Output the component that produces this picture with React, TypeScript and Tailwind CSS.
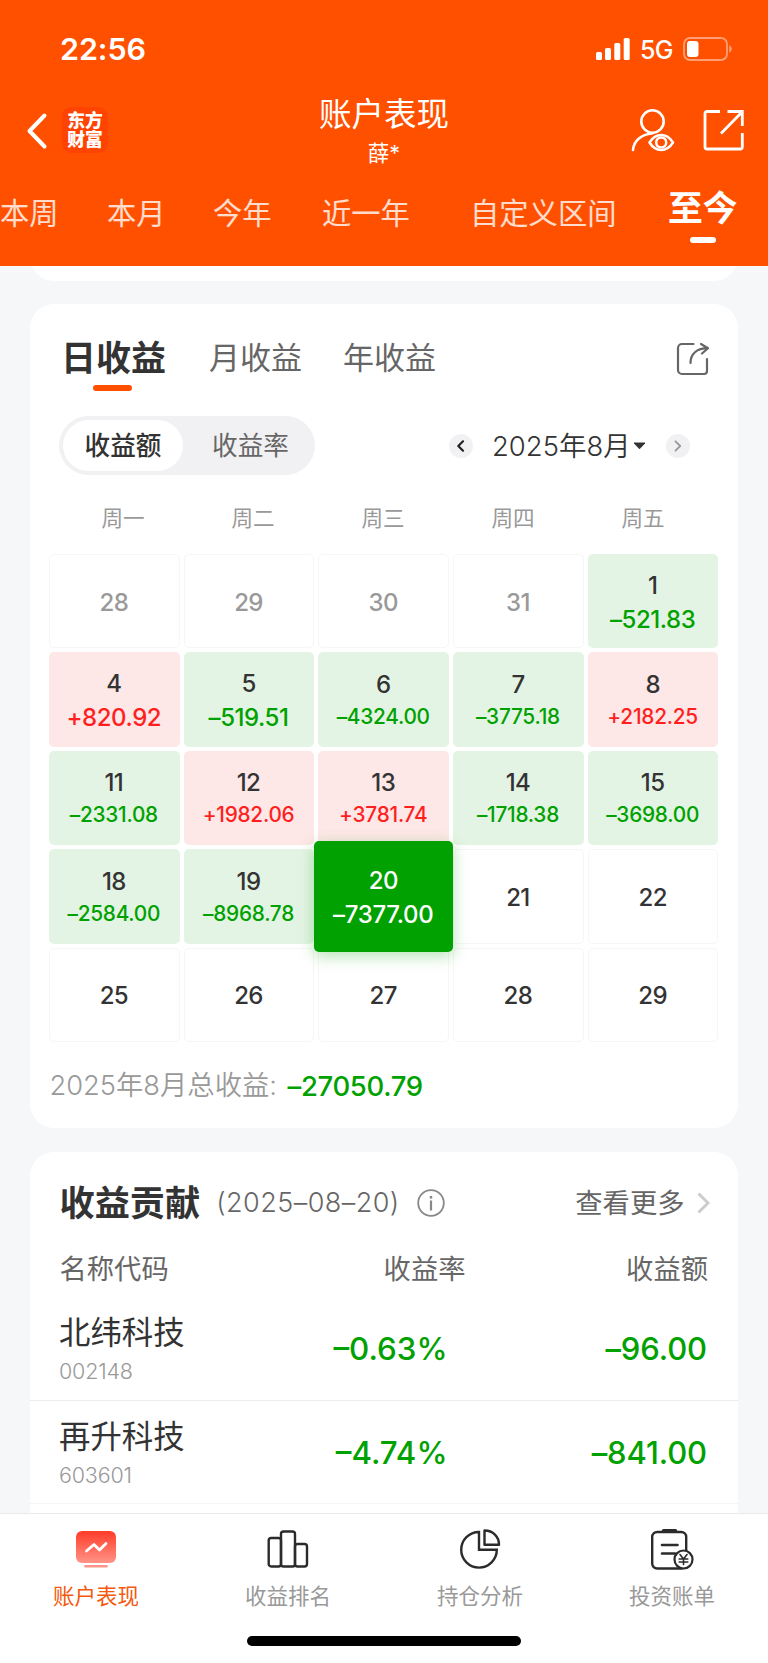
import React from 'react';

type Tone = 'up' | 'down' | 'muted' | 'plain' | 'active';
type Day = { day: string; value?: string; tone: Tone };

const days: Day[] = [
  { day: '28', tone: 'muted' },
  { day: '29', tone: 'muted' },
  { day: '30', tone: 'muted' },
  { day: '31', tone: 'muted' },
  { day: '1', value: '–521.83', tone: 'down' },
  { day: '4', value: '+820.92', tone: 'up' },
  { day: '5', value: '–519.51', tone: 'down' },
  { day: '6', value: '–4324.00', tone: 'down' },
  { day: '7', value: '–3775.18', tone: 'down' },
  { day: '8', value: '+2182.25', tone: 'up' },
  { day: '11', value: '–2331.08', tone: 'down' },
  { day: '12', value: '+1982.06', tone: 'up' },
  { day: '13', value: '+3781.74', tone: 'up' },
  { day: '14', value: '–1718.38', tone: 'down' },
  { day: '15', value: '–3698.00', tone: 'down' },
  { day: '18', value: '–2584.00', tone: 'down' },
  { day: '19', value: '–8968.78', tone: 'down' },
  { day: '20', value: '–7377.00', tone: 'active' },
  { day: '21', tone: 'plain' },
  { day: '22', tone: 'plain' },
  { day: '25', tone: 'plain' },
  { day: '26', tone: 'plain' },
  { day: '27', tone: 'plain' },
  { day: '28', tone: 'plain' },
  { day: '29', tone: 'plain' },
];

const toneClass: Record<Tone, string> = {
  up: 'bg-[#fee7e7] text-[#333]',
  down: 'bg-[#e4f4e4] text-[#333]',
  muted: 'border-[1.5px] border-[#f6f6f6] text-[#999]',
  plain: 'border-[1.5px] border-[#f6f6f6] text-[#333]',
  active: 'relative z-10 -mx-[4.2px] -my-[8.2px] bg-[#00a100] text-white shadow-[0_4px_16px_rgba(0,161,0,0.3)]',
};

function DayCell({ day, value, tone }: Day) {
  const short = !!value && (value.length === 7 || tone === 'active');
  const valueColor = tone === 'up' ? 'text-[#ff1f1f]' : tone === 'active' ? 'text-white' : 'text-[#00a100]';
  return (
    <div className={`flex flex-col items-center justify-center rounded-[5px] pt-[3px] pr-[1px] font-medium ${toneClass[tone]}`}>
      <span className="text-[24px] leading-[32px] tracking-[-0.6px]">{day}</span>
      {value && (
        <span
          className={`${valueColor} ${
            tone === 'active'
              ? 'mt-[2px] text-[24px] leading-[32px] tracking-[-0.3px]'
              : short
                ? 'mt-[2px] text-[24px] leading-[32px] tracking-[-0.45px]'
                : 'text-[20.8px] leading-[32px] tracking-[-0.25px]'
          }`}
        >
          {value}
        </span>
      )}
    </div>
  );
}

function StatusBar() {
  return (
    <div className="flex h-[98px] items-center pl-[60px] pr-[35px]">
      <span className="text-[30.5px] font-semibold leading-none tracking-[-0.1px]">22:56</span>
      <svg className="ml-auto" width="34" height="24" viewBox="0 0 34 24" fill="#fff">
        <rect x="0" y="15" width="6" height="8" rx="1.6" />
        <rect x="9" y="11" width="6" height="12" rx="1.6" />
        <rect x="18.3" y="6" width="6" height="17" rx="1.6" />
        <rect x="27.7" y="1" width="6" height="22" rx="1.6" />
      </svg>
      <span className="ml-[10px] w-[34px] pt-[3px] text-[25px] font-[450] leading-none tracking-[-0.6px]">5G</span>
      <svg className="ml-[9px]" width="50" height="24" viewBox="0 0 50 24">
        <rect x="1" y="1" width="43" height="22" rx="6" fill="none" stroke="#fff" strokeOpacity=".45" strokeWidth="1.8" />
        <rect x="4" y="4" width="11.5" height="16" rx="3" fill="#fff" />
        <path d="M46.2 8.5c1.9.6 2.6 2 2.6 3.5s-.7 2.9-2.6 3.5z" fill="#fff" fillOpacity=".45" />
      </svg>
    </div>
  );
}

function TitleBar() {
  return (
    <div className="flex h-[82px] items-start px-[24px]">
      <div className="flex w-[220px] items-center pt-[9px]">
        <svg width="26" height="46" viewBox="0 0 26 46" fill="none" stroke="#fff" strokeWidth="4" strokeLinecap="round" strokeLinejoin="round">
          <path d="M20.500 8.500 5.500 24l15 15.500" />
        </svg>
        <div className="ml-[12px] flex h-[46px] w-[46px] flex-col items-center justify-center rounded-[9px] bg-[#ff4300] text-[17.8px] font-black leading-[19.5px]">
          <span>东方</span>
          <span>财富</span>
        </div>
      </div>
      <div className="flex flex-1 flex-col items-center">
        <span className="text-[32.5px] leading-[34px]">账户表现</span>
        <span className="mt-[6px] text-[21.500px] leading-[30px]">薛*</span>
      </div>
      <div className="flex w-[220px] justify-end gap-[27px] pt-[10px]">
        <svg width="46" height="46" viewBox="0 0 46 46" fill="none" stroke="#fff" strokeWidth="2.6" strokeLinecap="round">
          <circle cx="23.5" cy="13.5" r="11.2" />
          <path d="M23 25.5C12 26.5 4.600 33 4 42" />
          <path d="M20.500 34.500c6.300-10 17.200-10 23.500 0-6.300 10-17.200 10-23.500 0Z" strokeWidth="2.500" strokeLinejoin="round" />
          <circle cx="32.200" cy="34.500" r="5" strokeWidth="2.500" />
        </svg>
        <svg width="42" height="46" viewBox="0 0 42 46" fill="none" stroke="#fff" strokeWidth="2.8">
          <path d="M18 3.500H5a2 2 0 0 0-2 2V39a2 2 0 0 0 2 2h33.300a2 2 0 0 0 2-2V25" />
          <path d="M25.500 3.500h14.800v14.500M40 4 19 25.500" />
        </svg>
      </div>
    </div>
  );
}

function RangeTabs() {
  return (
    <div className="flex h-[86px] text-[29.300px] leading-[68px] text-white/80">
      <span className="w-[107px]">本周</span>
      <span className="w-[106px]">本月</span>
      <span className="w-[109px]">今年</span>
      <span className="w-[148px]">近一年</span>
      <span className="w-[198px]">自定义区间</span>
      <div className="flex flex-col items-center text-white">
        <span className="text-[34.800px] font-bold leading-[57px]">至今</span>
        <span className="h-[6px] w-[26px] rounded-full bg-white" />
      </div>
    </div>
  );
}

function ProfitCalendar() {
  return (
    <section className="h-[824px] rounded-[24px] bg-white">
      <div className="flex h-[112px] pl-[31px] pr-[28px] text-[31px] text-[#666]">
        <div className="flex w-[105px] flex-col items-center pt-[29px]">
          <span className="text-[35px] font-bold leading-[50px] text-[#333]">日收益</span>
          <span className="mt-[2px] h-[6px] w-[39px] rounded-full bg-[#ff5000] mr-[3px]" />
        </div>
        <span className="ml-[43px] w-[134px] pt-[29px] leading-[49px]">月收益</span>
        <span className="pt-[29px] leading-[49px]">年收益</span>
        <svg className="ml-auto mt-[37px]" width="36" height="36" viewBox="0 0 36 36" fill="none" stroke="#666" strokeWidth="2.2" strokeLinecap="round" strokeLinejoin="round">
          <path d="M19.500 3H8a4 4 0 0 0-4 4v22a4 4 0 0 0 4 4h22a3 3 0 0 0 3-3V18" />
          <path d="M16.500 22c0-9 6-14.800 17.500-14.800M27 3l7 4.200-6 5.300" />
        </svg>
      </div>
      <div className="flex h-[59px] items-center pl-[29px]">
        <div className="flex h-[59px] w-[256px] items-center rounded-full bg-[#f1f1f3] p-[4px] text-[25.600px]">
          <span className="flex h-full w-[120px] items-center justify-center rounded-full bg-white pt-[2px] font-medium text-[#333]">收益额</span>
          <span className="flex-1 pt-[2px] pl-[7px] text-center text-[#666]">收益率</span>
        </div>
        <span className="ml-[133.500px] flex h-[24px] w-[24px] items-center justify-center rounded-full bg-[#f1f1f3]">
          <svg width="8" height="12" viewBox="0 0 8 12" fill="none" stroke="#222" strokeWidth="2.200" strokeLinecap="round" strokeLinejoin="round">
            <path d="M6 1.300 1.300 6l4.700 4.700" />
          </svg>
        </span>
        <span className="ml-[19.500px] w-[141px] whitespace-nowrap pt-[2px] text-[27.400px] font-[350] tracking-[0.050px] text-[#333]">2025年8月</span>
        <svg width="13" height="8" viewBox="0 0 13 8" fill="#333">
          <path d="M1 1h11L6.500 6.800z" stroke="#333" strokeLinejoin="round" />
        </svg>
        <span className="ml-[19.500px] flex h-[24px] w-[24px] items-center justify-center rounded-full bg-[#f1f1f3]">
          <svg width="8" height="12" viewBox="0 0 8 12" fill="none" stroke="#999" strokeWidth="1.800" strokeLinecap="round" strokeLinejoin="round">
            <path d="M1.500 1.300 6.200 6l-4.700 4.700" />
          </svg>
        </span>
      </div>
      <div className="grid h-[79px] grid-cols-5 pl-[28px] pr-[30px] pt-[10px] text-center text-[21.600px] leading-[66px] text-[#999]">
        <span>周一</span>
        <span>周二</span>
        <span>周三</span>
        <span>周四</span>
        <span>周五</span>
      </div>
      <div className="ml-[19px] mr-[19.500px] grid h-[488px] grid-cols-5 grid-rows-5 gap-[4px]">
        {days.map((d, i) => (
          <DayCell key={i} {...d} />
        ))}
      </div>
      <div className="flex h-[86px] items-center pl-[19.500px] pt-[3px] text-[27.300px] font-[350] text-[#999]">
        <span className="w-[238px] whitespace-nowrap">2025年8月总收益:</span>
        <span className="text-[27.500px] font-medium tracking-[-0.350px] text-[#00a100]">–27050.79</span>
      </div>
    </section>
  );
}

const holdings = [
  { name: '北纬科技', code: '002148', rate: '–0.63%', amount: '–96.00', line: 'border-[#ececee]' },
  { name: '再升科技', code: '603601', rate: '–4.74%', amount: '–841.00', line: 'border-[#f4f4f6]' },
];

function Contributions() {
  return (
    <section className="flex-1 rounded-t-[24px] bg-white">
      <div className="flex h-[102px] items-center pl-[29.500px] pr-[28px] text-[27.300px] text-[#666]">
        <h2 className="text-[35.200px] font-bold text-[#333]">收益贡献</h2>
        <span className="ml-[16px] w-[188px] whitespace-nowrap pt-[1px] text-[27px] font-[350] tracking-[0.450px]">(2025–08–20)</span>
        <svg className="ml-[11.500px]" width="30" height="30" viewBox="0 0 30 30" fill="none" stroke="#888">
          <circle cx="15" cy="15" r="12.800" strokeWidth="1.800" />
          <path d="M15 12.500v10" strokeWidth="2.200" />
          <path d="M15 8v2.600" strokeWidth="2.400" />
        </svg>
        <span className="ml-auto pt-[2px]">查看更多</span>
        <svg className="ml-[12.500px]" width="13" height="22" viewBox="0 0 13 22" fill="none" stroke="#ccc" strokeWidth="3">
          <path d="M1.500 1.500 11 11l-9.500 9.500" />
        </svg>
      </div>
      <div className="flex h-[32px] items-center pl-[29.500px] pr-[30px] pt-[1px] text-[27.300px] text-[#666]">
        <span className="w-[200px]">名称代码</span>
        <span className="w-[206px] text-right">收益率</span>
        <span className="flex-1 text-right">收益额</span>
      </div>
      <div className="pt-[11px]">
        {holdings.map((h) => (
          <div key={h.code} className={`flex h-[103.500px] border-b-[1.500px] pl-[29px] pr-[31px] ${h.line}`}>
            <div className="w-[170px] pt-[16px]">
              <div className="text-[31.400px] leading-[40px] text-[#333]">{h.name}</div>
              <div className="pt-[1px] text-[21.500px] font-[350] leading-[35px] tracking-[-0.2px] text-[#999]">{h.code}</div>
            </div>
            <span className="w-[218.500px] pt-[32px] text-right text-[31.300px] font-medium leading-[40px] text-[#00a100]">{h.rate}</span>
            <span className="flex-1 pt-[32px] text-right text-[31px] font-medium leading-[40px] tracking-[-0.100px] text-[#00a100]">{h.amount}</span>
          </div>
        ))}
      </div>
    </section>
  );
}

function NavItem({ label, active, children }: { label: string; active?: boolean; children: React.ReactNode }) {
  return (
    <div className="flex flex-1 flex-col items-center pt-[12px]">
      <svg width="46" height="46" viewBox="0 0 46 46" fill="none" stroke="#2b2b2b" strokeWidth="2.400" strokeLinejoin="round" strokeLinecap="round">
        {children}
      </svg>
      <span className={`mt-[8px] text-[21.500px] leading-[32px] ${active ? 'text-[#f4590f]' : 'text-[#999]'}`}>{label}</span>
    </div>
  );
}

function BottomNav() {
  return (
    <nav className="flex h-[150px] shrink-0 flex-col border-t-[1.500px] border-[#e9eaec] bg-white">
      <div className="flex h-[122px]">
        <NavItem label="账户表现" active>
          <defs>
            <linearGradient id="screen" x1="0" y1="0" x2="0" y2="1">
              <stop offset="0" stopColor="#ff3c28" />
              <stop offset="1" stopColor="#ff9387" />
            </linearGradient>
          </defs>
          <rect x="3" y="5" width="40" height="32" rx="6" fill="url(#screen)" stroke="none" />
          <path d="M13.500 25 21 18.500l5.500 5.500 6.500-6.500" stroke="#fff" strokeWidth="2.800" />
          <path d="M12.500 40.300h21" stroke="#ff9387" strokeWidth="2.600" />
        </NavItem>
        <NavItem label="收益排名">
          <rect x="3.700" y="12" width="12.300" height="28.500" rx="2.500" />
          <rect x="16" y="5.500" width="14" height="35" rx="2.500" />
          <rect x="30" y="18" width="12" height="22.500" rx="2.500" />
        </NavItem>
        <NavItem label="持仓分析">
          <path d="M22 6A17.800 17.800 0 1 0 39.800 23.800H22Z" strokeLinejoin="miter" />
          <path d="M27.500 4.500V18.700h14.500C42 10.500 36 4.500 27.500 4.500Z" />
        </NavItem>
        <NavItem label="投资账单">
          <rect x="3.200" y="6" width="34" height="36.500" rx="5" />
          <path d="M14.500 4.800h12" strokeWidth="3.400" />
          <path d="M13 19h15.500M13 27.500h13" strokeWidth="2.600" />
          <circle cx="34.500" cy="33.500" r="9" fill="#fff" strokeWidth="2.200" />
          <path d="m31 28.500 3.500 4.500 3.500-4.500M34.500 33v5.500M30.200 33h8.600M30.200 36h8.600" strokeWidth="1.600" />
        </NavItem>
      </div>
      <div className="mx-auto h-[10px] w-[274px] rounded-full bg-black" />
    </nav>
  );
}

export default function App() {
  return (
    <div className="flex h-[1663px] w-[768px] flex-col overflow-hidden bg-[#f6f7f9] font-['Inter','Noto_Sans_CJK_SC',sans-serif]">
      <header className="h-[266px] shrink-0 bg-[#ff5000] text-white">
        <StatusBar />
        <TitleBar />
        <RangeTabs />
      </header>
      <main className="flex min-h-0 flex-1 flex-col px-[30px]">
        <div className="h-[15px] shrink-0 overflow-hidden">
          <div className="-mt-[35px] h-[50px] rounded-b-[24px] bg-white" />
        </div>
        <div className="mt-[23px] shrink-0">
          <ProfitCalendar />
        </div>
        <div className="mt-[24px] flex min-h-0 flex-1 flex-col">
          <Contributions />
        </div>
      </main>
      <BottomNav />
    </div>
  );
}
